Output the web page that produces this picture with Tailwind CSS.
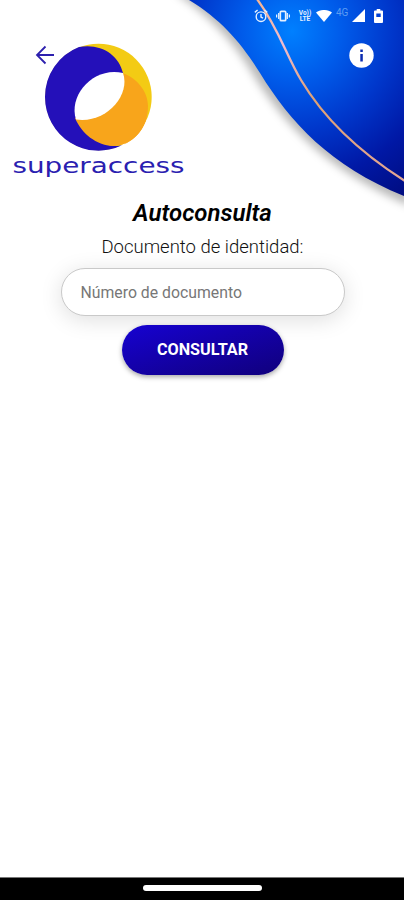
<!DOCTYPE html>
<html lang="es">
<head>
    <meta charset="UTF-8">
    <meta name="viewport" content="width=device-width, initial-scale=1.0">
    <script src="https://cdn.jsdelivr.net/npm/@tailwindcss/browser@4"></script>
    <title>Autoconsulta - superaccess</title>
</head>
<body class="bg-white font-['Roboto',sans-serif]">
    <div class="relative flex flex-col h-screen overflow-hidden">
        <!-- Wave background -->
        <svg class="absolute top-0 right-0 w-[234px] h-[230px]" viewBox="170 0 234 230" fill="none">
            <defs>
                <radialGradient id="wave" gradientUnits="userSpaceOnUse" cx="292" cy="31" r="200">
                    <stop offset="0" stop-color="#0080ff" />
                    <stop offset=".25" stop-color="#005bea" />
                    <stop offset=".5" stop-color="#0037cb" />
                    <stop offset=".75" stop-color="#0018a5" />
                    <stop offset="1" stop-color="#000c80" />
                </radialGradient>
                <linearGradient id="line" x1="0" y1="0" x2="0" y2="1">
                    <stop offset="0" stop-color="#f7b48e" />
                    <stop offset=".25" stop-color="#efbcd0" />
                    <stop offset=".55" stop-color="#dea174" />
                    <stop offset="1" stop-color="#e3a795" />
                </linearGradient>
                <filter id="soft" x="-20%" y="-20%" width="140%" height="140%">
                    <feGaussianBlur stdDeviation="4" />
                </filter>
            </defs>
            <path d="M174 -8C213 18 236 45 254 76C286 127 328 170 410 206V-8Z" fill="#000" fill-opacity=".28" filter="url(#soft)" />
            <path d="M189 0C222 20 242 44 260 73C290 122 330 166 404 196V0Z" fill="url(#wave)" />
            <path d="M257 -1C279 29 286 55 301 80C323 117 356 150 405 181" stroke="url(#line)" stroke-width="2.3" />
        </svg>

        <header class="relative h-[193px] shrink-0">
            <!-- Status bar -->
            <div class="flex items-center justify-end h-[31px] pr-[21px] text-[#e4f0ff]">
                <svg class="w-[14px] h-[14px] mr-[8px]" viewBox="0 0 14 14" fill="none" stroke="currentColor" stroke-width="1.4">
                    <circle cx="7" cy="7.7" r="4.8" />
                    <path d="M7 5v3l2 1.2M.8 3.4 3.6 1M13.2 3.4 10.4 1" />
                </svg>
                <svg class="w-[14px] h-[14px] mr-[8px]" viewBox="0 0 14 14" fill="none" stroke="currentColor">
                    <rect x="4.3" y="2.3" width="5.4" height="9.4" rx="1" stroke-width="1.7" />
                    <path d="M2.7 4v6M.6 5.6v2.8M11.3 4v6M13.4 5.6v2.8" stroke-width="1.3" />
                </svg>
                <div class="w-[14px] mr-[4px] text-[6.5px] leading-[6px] font-bold text-center">Vo)) LTE</div>
                <svg class="w-[16px] h-[12px] mr-[4px] text-white" viewBox="0 0 16 12" fill="currentColor">
                    <path d="M0 2.6C4.6-.9 11.4-.9 16 2.6L8 12Z" />
                </svg>
                <span class="w-[14px] mr-[2px] text-[10px] leading-none text-[#5d9cf3] -mt-[5px]">4G</span>
                <svg class="w-[13px] h-[13px] mr-[9px] text-white" viewBox="0 0 13 13" fill="currentColor">
                    <path d="M13 0V13H0Z" />
                </svg>
                <svg class="w-[9px] h-[14px] text-white" viewBox="0 0 9 14" fill="currentColor" fill-rule="evenodd">
                    <path d="M2.7 0h3.6v1.5H8a1 1 0 0 1 1 1V13a1 1 0 0 1-1 1H1a1 1 0 0 1-1-1V2.5a1 1 0 0 1 1-1h1.7ZM2.3 4.5V8h4.4V4.5Z" />
                </svg>
            </div>

            <!-- Logo -->
            <svg class="absolute left-0 top-[31px] w-[200px] h-[160px]" viewBox="0 31 200 160" role="img" aria-label="superaccess">
                <circle cx="98.5" cy="97" r="53.2" fill="#f3cb14" />
                <path d="M79 47C101 43 119 55 123 73L76 119C84 134 99 146 117 146L122 145.2A53.5 53.5 0 0 1 45 97A53.500 53.500 0 0 1 79 47Z" fill="#2410b9" />
                <path d="M122 73C136 77 148 91 148 106C148 130 131 146 113 146C96 145 82 134 75 118L105 105Z" fill="#f8a51b" />
                <path d="M147 116Q143 135 124 144.500L130 140Q141 131 147 116Z" fill="#f8a51b" />
                <path d="M123 73C131 96 105 124 76 119.5C68 95 94 66 123 73Z" fill="#fff" />
                <text x="12.5" y="173" textLength="172" lengthAdjust="spacingAndGlyphs" font-family="DejaVu Sans, sans-serif" font-size="21" fill="#2a20b0">superaccess</text>
            </svg>

            <button type="button" aria-label="Volver" class="absolute left-[35px] top-[45px]">
                <svg class="w-[20px] h-[20px]" viewBox="0 0 20 20" fill="none" stroke="#2d20ae" stroke-width="1.8">
                    <path d="M19 10H2M10.5 1.5 2 10l8.5 8.5" />
                </svg>
            </button>
            <button type="button" aria-label="Información" class="absolute left-[349px] top-[43px]">
                <svg class="w-[25px] h-[25px]" viewBox="0 0 25 25">
                    <circle cx="12.5" cy="12.5" r="12.2" fill="#fff" />
                    <path d="M11.3 6.5h2.5V9h-2.5ZM11.3 11h2.5v7.5h-2.5Z" fill="#0b2bb0" />
                </svg>
            </button>
        </header>

        <main class="relative flex flex-col items-center flex-1 pl-px">
            <h1 class="mt-[4px] text-[24px] leading-[32px] font-semibold italic text-black">Autoconsulta</h1>
            <label for="documento" class="mt-[5px] text-[18.5px] leading-[26px] font-light text-[#111]">Documento de identidad:</label>
            <input type="text" id="documento" name="documento" placeholder="Número de documento" class="mt-[8px] w-[284px] h-[48px] rounded-full border border-[#c9c9c9] bg-white px-[19px] text-[15.8px] placeholder-[#777] shadow-[0_4px_22px_rgba(0,0,0,0.13)] focus:outline-none">
            <button type="button" class="relative mt-[9px] w-[162px] h-[50px] rounded-full bg-linear-to-br from-[#1602d2] to-[#10007c] text-[16.2px] font-bold text-white shadow-[0_2px_5px_rgba(0,0,0,0.35)]">CONSULTAR</button>
        </main>

        <!-- Navigation bar -->
        <footer class="flex items-center justify-center h-[23px] shrink-0 bg-black border-t border-[#777]">
            <div class="w-[119px] h-[6px] mt-[-3px] rounded-full bg-white"></div>
        </footer>
    </div>
</body>
</html>
